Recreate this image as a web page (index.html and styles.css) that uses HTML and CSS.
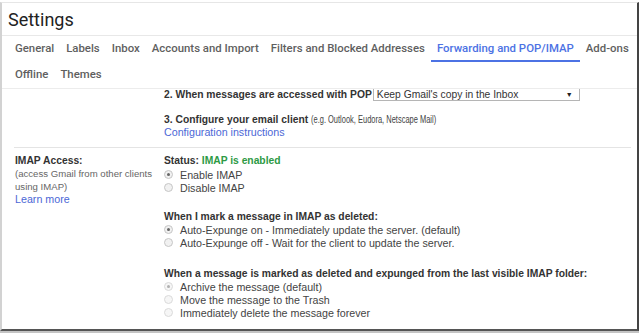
FILE: index.html
```html
<!DOCTYPE html>
<html lang="en">
<head>
    <meta charset="UTF-8">
    <meta name="viewport" content="width=device-width, initial-scale=1.0">
    <title>Settings</title>
    <link rel="stylesheet" href="styles.css">
</head>
<body>
    <div class="window">
        <div class="header">Settings</div>

        <div class="tabs">
            <span class="tab">General</span>
            <span class="tab">Labels</span>
            <span class="tab">Inbox</span>
            <span class="tab">Accounts and Import</span>
            <span class="tab">Filters and Blocked Addresses</span>
            <span class="tab active">Forwarding and POP/IMAP</span>
            <span class="tab">Add-ons</span>
            <span class="tab">Offline</span>
            <span class="tab">Themes</span>
        </div>

        <div class="content">
            <div class="scroller">
                <div class="section pop">
                    <div class="label-col"></div>
                    <div class="value-col">
                        <div class="pop-row">
                            <b>2. When messages are accessed with POP</b>
                            <span class="select">Keep Gmail's copy in the Inbox <span class="arrow">&#9660;</span></span>
                        </div>
                        <div class="line step"><b>3. Configure your email client</b> <span class="example">(e.g. Outlook, Eudora, Netscape Mail)</span></div>
                        <div class="line"><a class="link" href="#">Configuration instructions</a></div>
                    </div>
                </div>

                <div class="section imap">
                    <div class="label-col">
                        <div class="line"><b>IMAP Access:</b></div>
                        <div class="hint">(access Gmail from other clients</div>
                        <div class="hint">using IMAP)</div>
                        <div class="line"><a class="link" href="#">Learn more</a></div>
                    </div>
                    <div class="value-col">
                        <div class="line status"><b>Status: <span class="ok">IMAP is enabled</span></b></div>
                        <div class="option"><span class="radio on"></span>Enable IMAP</div>
                        <div class="option"><span class="radio"></span>Disable IMAP</div>

                        <div class="group">
                            <div class="line"><b>When I mark a message in IMAP as deleted:</b></div>
                            <div class="option"><span class="radio on"></span>Auto-Expunge on - Immediately update the server. (default)</div>
                            <div class="option"><span class="radio"></span>Auto-Expunge off - Wait for the client to update the server.</div>
                        </div>

                        <div class="group">
                            <div class="line"><b>When a message is marked as deleted and expunged from the last visible IMAP folder:</b></div>
                            <div class="option"><span class="radio on faded"></span>Archive the message (default)</div>
                            <div class="option"><span class="radio faded"></span>Move the message to the Trash</div>
                            <div class="option"><span class="radio faded"></span>Immediately delete the message forever</div>
                        </div>
                    </div>
                </div>
            </div>
        </div>
    </div>
    <div class="shade"></div>
</body>
</html>
```

FILE: styles.css
```css
body {
    margin: 0;
    padding-top: 2px;
    background-color: #ffffff;
    font-family: 'Liberation Sans', Arial, sans-serif;
    font-size: 10.7px;
    color: #444444;
}
.window {
    width: 639px;
    height: 329px;
    box-sizing: border-box;
    border-top: 1px solid #e6e6e6;
    border-left: 2px solid #d2d2d2;
    border-right: 2px solid #444444;
    border-bottom: 2px solid #555555;
    display: flex;
    flex-direction: column;
    overflow: hidden;
}
.shade {
    width: 639px;
    height: 2px;
    background-color: #c4c4c4;
}
.header {
    height: 32px;
    flex-shrink: 0;
    padding-left: 6px;
    display: flex;
    align-items: center;
    font-family: Roboto, sans-serif;
    font-size: 18px;
    color: #222222;
    border-bottom: 1px solid #e8e8e8;
}
.tabs {
    display: flex;
    flex-wrap: wrap;
    flex-shrink: 0;
    padding-left: 7px;
    border-bottom: 1px solid #ececec;
}
.tab {
    height: 26px;
    box-sizing: border-box;
    padding: 0 6px;
    display: flex;
    align-items: center;
    font-family: Roboto, sans-serif;
    font-weight: 500;
    font-size: 11.4px;
    color: #5f5f5f;
    border-bottom: 2px solid transparent;
}
.tab.active {
    color: #4c72e4;
    border-bottom-color: #4c72e4;
}
.content {
    flex: 1;
    overflow: hidden;
}
.scroller {
    margin-top: -2px;
}
.section {
    display: grid;
    grid-template-columns: 149px 1fr;
    padding-left: 13px;
}
.section b {
    font-size: 10.3px;
    color: #333333;
}
.pop {
    padding-bottom: 8px;
}
.imap {
    margin: 0 6px 0 12px;
    padding-left: 1px;
    padding-top: 6px;
    border-top: 1px solid #e4e4e4;
}
.line {
    line-height: 13px;
}
.pop-row {
    display: flex;
    align-items: center;
    gap: 1px;
    height: 14px;
}
.select {
    width: 207px;
    height: 13px;
    box-sizing: border-box;
    border: 1px solid #b5b5b5;
    padding: 0 6px 0 3px;
    display: flex;
    align-items: center;
    justify-content: space-between;
    font-size: 10.3px;
    color: #333333;
}
.arrow {
    font-size: 7px;
    color: #222222;
}
.step {
    margin-top: 12px;
}
.example {
    display: inline-block;
    transform: scaleX(0.7);
    transform-origin: left center;
}
.link {
    color: #4b67d6;
    text-decoration: none;
}
.hint {
    font-size: 9.6px;
    line-height: 13px;
    color: #666666;
}
.status {
    margin-bottom: 1px;
}
.ok {
    color: #2e9a45;
}
.option {
    display: flex;
    align-items: center;
    height: 13px;
}
.radio {
    width: 9px;
    height: 9px;
    box-sizing: border-box;
    margin: 0 7px 0 0;
    border: 1px solid #c6c6c6;
    border-radius: 50%;
    background-color: #f1f1f1;
    display: flex;
    align-items: center;
    justify-content: center;
}
.radio.on::after {
    content: '';
    width: 3px;
    height: 3px;
    border-radius: 50%;
    background-color: #666666;
}
.radio.faded {
    border-color: #dadada;
    background-color: #f6f6f6;
}
.radio.faded.on::after {
    background-color: #b0b0b0;
}
.group {
    margin-top: 16px;
}
.group + .group {
    margin-top: 18px;
}
```
